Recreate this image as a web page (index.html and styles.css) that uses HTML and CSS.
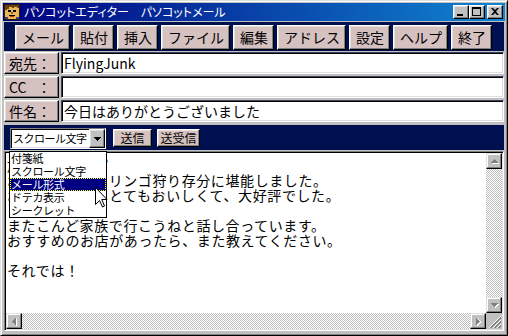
FILE: index.html
```html
<!DOCTYPE html>
<html lang="ja">
<head>
<meta charset="utf-8">
<title>パソコットメール</title>
<link rel="stylesheet" href="styles.css">
</head>
<body>
<div class="window">
  <div class="titlebar">
    <svg class="app-icon" width="16" height="16" viewBox="0 0 16 16" shape-rendering="crispEdges">
      <rect x="0" y="0" width="16" height="16" fill="#2a1a08"/>
      <rect x="1" y="1" width="14" height="14" fill="#e8b858"/>
      <path d="M1 1h14v3h-2v-1h-3v1h-2v-1h-3v2h-2v1h-2z" fill="#6a4010"/>
      <rect x="4" y="6" width="3" height="2" fill="#000"/>
      <rect x="9" y="6" width="3" height="2" fill="#000"/>
      <rect x="7" y="8" width="2" height="2" fill="#a06018"/>
      <rect x="5" y="11" width="6" height="1" fill="#000"/>
      <rect x="6" y="12" width="4" height="1" fill="#c03010"/>
      <rect x="1" y="13" width="3" height="2" fill="#3040a0"/>
      <rect x="12" y="13" width="3" height="2" fill="#3040a0"/>
    </svg>
    <span class="title">パソコットエディター　パソコットメール</span>
    <div class="caption-btns">
      <span class="cbtn"><svg width="14" height="12" viewBox="1 1 14 12" shape-rendering="crispEdges"><rect x="4" y="9" width="6" height="2" fill="#000"/></svg></span>
      <span class="cbtn"><svg width="14" height="12" viewBox="1 1 14 12" shape-rendering="crispEdges"><path d="M3 2h9v9h-9z M4 4v6h7v-6z" fill="#000" fill-rule="evenodd"/></svg></span>
      <span class="cbtn close"><svg width="14" height="12" viewBox="1 1 14 12"><path d="M4 3h2l2 2l2-2h2l-3 3.5l3 3.5h-2l-2-2l-2 2h-2l3-3.5z" fill="#000"/></svg></span>
    </div>
  </div>

  <div class="menubar">
    <span class="mbtn">メール</span>
    <span class="mbtn">貼付</span>
    <span class="mbtn">挿入</span>
    <span class="mbtn">ファイル</span>
    <span class="mbtn">編集</span>
    <span class="mbtn">アドレス</span>
    <span class="mbtn">設定</span>
    <span class="mbtn">ヘルプ</span>
    <span class="mbtn">終了</span>
  </div>

  <div class="fields">
    <div class="row">
      <div class="label"><span class="lname">宛先</span>：</div>
      <div class="input">FlyingJunk</div>
    </div>
    <div class="row">
      <div class="label"><span class="lname">CC</span>：</div>
      <div class="input"></div>
    </div>
    <div class="row">
      <div class="label"><span class="lname">件名</span>：</div>
      <div class="input">今日はありがとうございました</div>
    </div>
  </div>

  <div class="actionbar">
    <div class="select">
      <span class="select-text">スクロール文字</span>
      <span class="select-arrow"><svg width="14" height="17" viewBox="0 0 14 17" shape-rendering="crispEdges"><path d="M4 7h7v1h-1v1h-1v1h-1v1h-1v-1h-1v-1h-1v-1h-1z" fill="#000"/></svg></span>
    </div>
    <span class="abtn send">送信</span>
    <span class="abtn sendrecv">送受信</span>
  </div>

  <div class="editor">
    <div class="text">旅行のグループ
おかげさまで、リンゴ狩り存分に堪能しました。
お土産リンゴもとてもおいしくて、大好評でした。

またこんど家族で行こうねと話し合っています。
おすすめのお店があったら、また教えてください。

それでは！</div>
    <div class="vscroll">
      <span class="sbtn"><svg width="14" height="14" viewBox="1 1 14 14" shape-rendering="crispEdges"><path d="M9 7h1v1h1v1h1v1h1v1h-7v-1h1v-1h1v-1h1z" fill="#fff"/><path d="M8 6h1v1h1v1h1v1h1v1h-7v-1h1v-1h1v-1h1z" fill="#808080"/></svg></span>
      <span class="strack"></span>
      <span class="sbtn"><svg width="14" height="14" viewBox="1 1 14 14" shape-rendering="crispEdges"><path d="M6 7h7v1h-1v1h-1v1h-1v1h-1v-1h-1v-1h-1v-1h-1z" fill="#fff"/><path d="M5 6h7v1h-1v1h-1v1h-1v1h-1v-1h-1v-1h-1v-1h-1z" fill="#808080"/></svg></span>
    </div>
    <div class="hscroll">
      <span class="sbtn"><svg width="14" height="14" viewBox="1 1 14 14" shape-rendering="crispEdges"><path d="M7 9v1h1v1h1v1h1v1h1v-8h-1v1h-1v1h-1v1h-1z" fill="#fff"/><path d="M6 8v1h1v1h1v1h1v1h1v-7h-1v1h-1v1h-1v1h-1z" fill="#808080"/></svg></span>
      <span class="strack"></span>
      <span class="sbtn"><svg width="14" height="14" viewBox="1 1 14 14" shape-rendering="crispEdges"><path d="M11 9v1h-1v1h-1v1h-1v1h-1v-8h1v1h1v1h1v1h1z" fill="#fff"/><path d="M10 8v1h-1v1h-1v1h-1v1h-1v-7h1v1h1v1h1v1h1z" fill="#808080"/></svg></span>
    </div>
    <div class="corner">
      <svg width="16" height="16" viewBox="0 0 16 16" shape-rendering="crispEdges">
        <path d="M15 3L3 15M15 7L7 15M15 11L11 15" stroke="#fff" stroke-width="1"/>
        <path d="M15 4L4 15M15 5L5 15M15 8L8 15M15 9L9 15M15 12L12 15M15 13L13 15" stroke="#808080" stroke-width="1"/>
      </svg>
    </div>
  </div>

  <ul class="dropdown">
    <li>付箋紙</li>
    <li>スクロール文字</li>
    <li class="selected">メール形式</li>
    <li>ドテカ表示</li>
    <li>シークレット</li>
  </ul>

  <svg class="cursor" width="13" height="21" viewBox="0 0 13 21">
    <path d="M0.5 0.5V17.5L4.5 13.5L7.5 20L9.5 19L6.8 12.5H12z" fill="#fff" stroke="#000" stroke-width="1" stroke-linejoin="miter"/>
  </svg>
</div>
</body>
</html>
```

FILE: styles.css
```css
* {
  box-sizing: border-box;
}

html,
body {
  margin: 0;
  padding: 0;
}

body {
  width: 508px;
  height: 336px;
  overflow: hidden;
  background: #c0c0c0;
  font-family: "Noto Sans CJK JP", "Liberation Sans", sans-serif;
  color: #000;
}

.window {
  position: relative;
  width: 508px;
  height: 336px;
  background: #c0c0c0;
  border: 1px solid;
  border-color: #dfdfdf #000 #000 #dfdfdf;
  box-shadow: inset 1px 1px #fff, inset -1px -1px #808080;
  padding: 2px;
  display: flex;
  flex-direction: column;
}

/* ---------- title bar ---------- */
.titlebar {
  height: 18px;
  flex: none;
  display: flex;
  align-items: center;
  padding: 0 2px 0 1px;
  background: linear-gradient(to right, #000080, #1084d0);
}

.app-icon {
  display: block;
  flex: none;
  margin-right: 4px;
}

.title {
  color: #fff;
  font-size: 12px;
  line-height: 18px;
  white-space: nowrap;
  font-feature-settings: "palt";
}

.caption-btns {
  margin-left: auto;
  display: flex;
}

.cbtn {
  display: block;
  width: 16px;
  height: 14px;
  background: #c0c0c0;
  border: 1px solid;
  border-color: #fff #000 #000 #fff;
  box-shadow: inset -1px -1px #808080, inset 1px 1px #dfdfdf;
}

.cbtn svg {
  display: block;
}

.cbtn.close {
  margin-left: 2px;
}

/* ---------- command buttons ---------- */
.menubar {
  flex: none;
  height: 29px;
  margin: 1px 1px 0;
  padding: 3px 0 0 11px;
  background: #000f4f;
  display: flex;
  align-items: flex-start;
  gap: 3px;
}

.mbtn {
  display: block;
  height: 25px;
  padding: 0 5px 0 6px;
  background: #d6c1c1;
  border: 1px solid;
  border-color: #fff #000 #000 #fff;
  box-shadow: inset -1px -1px #808080, inset 1px 1px #e8dede;
  font-size: 14px;
  line-height: 23px;
  white-space: nowrap;
}

/* ---------- address fields ---------- */
.fields {
  flex: none;
  margin: 1px 1px 0;
  display: flex;
  flex-direction: column;
  gap: 2px;
}

.row {
  display: flex;
  gap: 2px;
  height: 22px;
}

.label {
  width: 55px;
  flex: none;
  display: flex;
  padding-left: 4px;
  background: #d6c1c1;
  border: 1px solid;
  border-color: #fff #000 #000 #fff;
  box-shadow: inset -1px -1px #808080, inset 1px 1px #e8dede;
  font-size: 14px;
  line-height: 20px;
}

.lname {
  width: 28px;
}

.input {
  flex: 1;
  background: #fff;
  border: 1px solid;
  border-color: #404060 #fff #fff #404060;
  box-shadow: inset 1px 1px #000, inset -1px -1px #dfdfdf;
  padding-left: 2px;
  font-size: 14px;
  line-height: 20px;
  white-space: nowrap;
  overflow: hidden;
}

/* ---------- action bar ---------- */
.actionbar {
  flex: none;
  height: 25px;
  margin: 3px 1px 0;
  padding: 3px 0 0 6px;
  background: #000f4f;
  display: flex;
  align-items: flex-start;
}

.select {
  width: 96px;
  height: 21px;
  display: flex;
  background: #fff;
  border: 1px solid;
  border-color: #808080 #fff #fff #808080;
  box-shadow: inset 1px 1px #000, inset -1px -1px #dfdfdf;
  padding: 1px 0 1px 1px;
}

.select-text {
  flex: 1;
  min-width: 0;
  font-size: 11px;
  letter-spacing: -0.5px;
  line-height: 17px;
  padding-left: 1px;
  white-space: nowrap;
}

.select-arrow {
  display: block;
  flex: none;
  width: 16px;
  height: 19px;
  margin-top: -1px;
  background: #c0c0c0;
  border: 1px solid;
  border-color: #fff #000 #000 #fff;
  box-shadow: inset -1px -1px #808080, inset 1px 1px #dfdfdf;
}

.select-arrow svg {
  display: block;
}

.abtn {
  display: block;
  height: 18px;
  margin-top: 1px;
  background: #d6c1c1;
  border: 1px solid;
  border-color: #fff #000 #000 #fff;
  box-shadow: inset -1px -1px #808080, inset 1px 1px #e8dede;
  font-size: 12px;
  line-height: 16px;
  text-align: center;
  white-space: nowrap;
}

.send {
  width: 39px;
  margin-left: 7px;
}

.sendrecv {
  width: 43px;
  margin-left: 5px;
}

/* ---------- editor ---------- */
.editor {
  flex: none;
  height: 180px;
  margin: 1px 1px 0;
  background: #fff;
  border: 1px solid;
  border-color: #808080 #fff #fff #808080;
  box-shadow: inset 1px 1px #000, inset -1px -1px #dfdfdf;
  padding: 1px;
  display: grid;
  grid-template-columns: 1fr 16px;
  grid-template-rows: 1fr 16px;
}

.text {
  font-size: 14px;
  line-height: 15px;
  letter-spacing: 0.6px;
  padding: 5px 0 0 1px;
  white-space: pre;
  overflow: hidden;
}

.vscroll,
.hscroll {
  display: flex;
  background-color: #fff;
  background-image: repeating-conic-gradient(#c0c0c0 0% 25%, #fff 0% 50%);
  background-size: 2px 2px;
}

.vscroll {
  flex-direction: column;
}

.strack {
  flex: 1;
}

.sbtn {
  display: block;
  flex: none;
  width: 16px;
  height: 16px;
  background: #c0c0c0;
  border: 1px solid;
  border-color: #dfdfdf #000 #000 #dfdfdf;
  box-shadow: inset -1px -1px #808080, inset 1px 1px #fff;
}

.sbtn svg {
  display: block;
}

.corner {
  background: #c0c0c0;
}

.corner svg {
  display: block;
}

/* ---------- open dropdown list (overlay) ---------- */
.dropdown {
  position: absolute;
  left: 8px;
  top: 150px;
  width: 98px;
  height: 67px;
  margin: 0;
  padding: 0;
  list-style: none;
  background: #fff;
  border: 1px solid #000;
  font-size: 11px;
  letter-spacing: -0.3px;
  line-height: 13px;
}

.dropdown li {
  height: 13px;
  padding-left: 1px;
  white-space: nowrap;
}

.dropdown li.selected {
  background: #000080;
  color: #fff;
  outline: 1px dotted #ffff00;
  outline-offset: -1px;
}

/* ---------- mouse pointer (overlay) ---------- */
.cursor {
  position: absolute;
  left: 94px;
  top: 186px;
  display: block;
}
```
